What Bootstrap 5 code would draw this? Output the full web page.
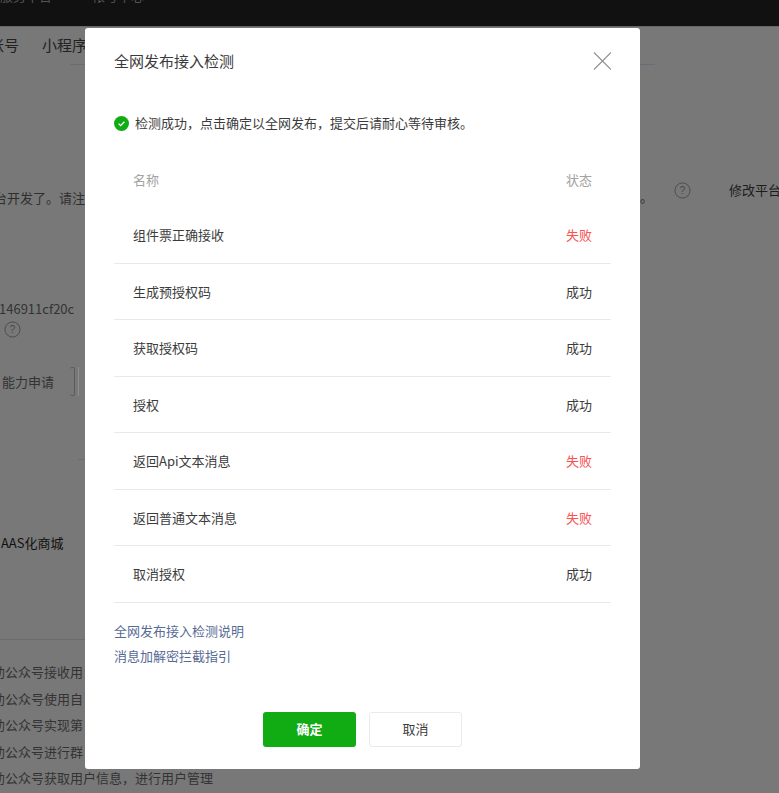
<!DOCTYPE html>
<html lang="zh-CN">
<head>
<meta charset="utf-8">
<title>全网发布接入检测</title>
<link href="https://cdn.jsdelivr.net/npm/bootstrap@5.3.0/dist/css/bootstrap.min.css" rel="stylesheet">
<style>
html,body{height:100%;margin:0;overflow:hidden}
body{font-family:"Noto Sans CJK SC","Liberation Sans",sans-serif;font-size:13px;background:#787878;color:#333}
.stage{height:793px;width:779px;overflow:hidden;position:relative}
.topbar{height:26px;background:#111;overflow:hidden;color:#555;font-size:13px;box-shadow:0 1px 0 #666}
.topbar span{display:block;margin-top:-14px;line-height:20px}
.topbar .second{margin-left:40px}
.tabrow{height:38px;padding-top:9px;font-size:15px;color:#222;line-height:20px;margin-left:-11px;gap:23px}
.tabline{height:1px;background:#6c6c78;margin-left:70px;width:585px}
.intro{margin-top:115px;height:20px;line-height:20px;color:#2f2f2f;position:relative}
.introline{white-space:nowrap;width:91px;margin-left:-6px;overflow:hidden;margin-top:8px;flex:none}
.right-tools{margin-left:589px;flex:none;white-space:nowrap}
.qmark{width:17px;height:17px;flex:none;display:block}
.rt-dot{position:absolute;left:640px;top:187px;color:#2f2f2f;line-height:20px}
.edit-link{font-size:13px;color:#1c1c1c;white-space:nowrap;margin-left:38px}
.appid{margin-top:99px;font-size:13px;line-height:20px;color:#333;margin-left:-1px;white-space:nowrap}
.help-one{margin:2px 0 0 4px}
.ability-row{margin-top:29px;height:29px;line-height:29px;color:#333;padding-left:2px;align-items:center}
.ability-btn{width:5px;height:29px;margin-left:16px;border:1px solid #5c5c5c;border-left:0;border-radius:2px}
.ability-edge{width:1px;height:29px;margin-left:3px;background:#8e8e8e}
.rule-short{height:1px;background:#6c6c6c;width:7px;margin-left:78px;margin-top:63px}
.saas{margin-top:73px;line-height:20px;color:#111;padding-left:1px}
.rule-two{height:1px;background:#6c6c6c;width:85px;margin-top:86px}
.func-list{margin:19px 0 0 -21px;padding:0;list-style:none;color:#333;line-height:26.5px;white-space:nowrap}
.dialog-box{position:absolute;left:85px;top:28px;width:555px;height:741px;border:0;border-radius:3px;padding:0 29px;background:#fff;color:#333}
.dialog-head{height:66px;padding-top:23px;line-height:20px;font-size:15px;color:#3a3a3a}
.close-x{position:absolute;top:24px;right:29px;padding:0;border:0;background:none;line-height:0}
.notice{margin-top:19px;height:20px;line-height:20px;gap:6px;color:#3c3c3c}
.check-table{width:497px;margin:22px 0 0 0;table-layout:fixed;--bs-table-bg:transparent}
.check-table>:not(caption)>*>*{padding:0 19px;border-bottom:1px solid #e9e9e9;vertical-align:middle;font-size:13px;color:#3c3c3c;box-shadow:none;height:56.45px}
.check-table thead th{font-weight:400;color:#a3a3a3;border-bottom:0;height:52px;padding-bottom:2px}
.check-table .st-col{text-align:right;width:120px}
.check-table td.st-fail{color:#fa5151}
.doc-links{margin-top:18px;line-height:20px}
.doc-links a{display:block;color:#576b95;text-decoration:none;margin-bottom:5px}
.dialog-foot{margin-top:46px;gap:13px;justify-content:center}
.ok-btn,.ok-btn:hover{width:93px;height:35px;padding:0;font-size:13px;font-weight:700;background:#11ab13;border:0;border-radius:3px;color:#fff}
.no-btn,.no-btn:hover{width:93px;height:35px;padding:0;font-size:13px;background:#fff;border:1px solid #eaeaea;border-radius:3px;color:#3c3c3c}
</style>
</head>
<body>
<div class="stage">
  <div class="topbar d-flex"><span>服务平台</span><span class="second">帐号中心</span></div>
  <div class="tabrow d-flex"><span>账号</span><span>小程序</span></div>
  <div class="tabline"></div>
  <div class="intro d-flex align-items-start">
    <div class="introline">台开发了。请注意</div>
    <div class="right-tools d-flex align-items-center">
      <svg class="qmark" viewBox="0 0 18 18"><circle cx="9" cy="9" r="8" fill="none" stroke="#4a4a4a"/><text x="9" y="13" text-anchor="middle" font-size="11" fill="#4a4a4a" font-family="Liberation Sans">?</text></svg>
      <span class="edit-link">修改平台信息</span>
    </div>
  </div>
  <div class="rt-dot">。</div>
  <div class="appid">146911cf20c</div>
  <svg class="qmark help-one" viewBox="0 0 18 18"><circle cx="9" cy="9" r="8" fill="none" stroke="#4a4a4a"/><text x="9" y="13" text-anchor="middle" font-size="11" fill="#4a4a4a" font-family="Liberation Sans">?</text></svg>
  <div class="ability-row d-flex"><span>能力申请</span><span class="ability-btn"></span><span class="ability-edge"></span></div>
  <div class="rule-short"></div>
  <div class="saas">AAS化商城</div>
  <div class="rule-two"></div>
  <ul class="func-list">
    <li>协助公众号接收用</li>
    <li>协助公众号使用自</li>
    <li>协助公众号实现第</li>
    <li>协助公众号进行群</li>
    <li>协助公众号获取用户信息，进行用户管理</li>
  </ul>

  <div class="dialog-box" role="dialog">
    <div class="dialog-head">全网发布接入检测</div>
    <button class="close-x" type="button" aria-label="关闭">
      <svg width="18" height="18" viewBox="0 0 18 18"><path d="M1 .5l17 17M18 .5L1 17.5" fill="none" stroke="#8f8f8f" stroke-width="1.1"/></svg>
    </button>
    <div class="notice d-flex align-items-center">
      <svg width="15" height="15" viewBox="0 0 15 15"><circle cx="7.5" cy="7.5" r="7.5" fill="#11ab13"/><path d="M4.6 7.6l2 2 3.8-3.9" fill="none" stroke="#fff" stroke-width="1.3"/></svg>
      <span>检测成功，点击确定以全网发布，提交后请耐心等待审核。</span>
    </div>
    <table class="table check-table">
      <thead><tr><th>名称</th><th class="st-col">状态</th></tr></thead>
      <tbody>
        <tr><td>组件票正确接收</td><td class="st-col st-fail">失败</td></tr>
        <tr><td>生成预授权码</td><td class="st-col">成功</td></tr>
        <tr><td>获取授权码</td><td class="st-col">成功</td></tr>
        <tr><td>授权</td><td class="st-col">成功</td></tr>
        <tr><td>返回Api文本消息</td><td class="st-col st-fail">失败</td></tr>
        <tr><td>返回普通文本消息</td><td class="st-col st-fail">失败</td></tr>
        <tr><td>取消授权</td><td class="st-col">成功</td></tr>
      </tbody>
    </table>
    <div class="doc-links">
      <a href="#">全网发布接入检测说明</a>
      <a href="#">消息加解密拦截指引</a>
    </div>
    <div class="dialog-foot d-flex">
      <button class="btn ok-btn" type="button">确定</button>
      <button class="btn no-btn" type="button">取消</button>
    </div>
  </div>
</div>
<script src="https://cdn.jsdelivr.net/npm/bootstrap@5.3.0/dist/js/bootstrap.bundle.min.js"></script>
</body>
</html>
